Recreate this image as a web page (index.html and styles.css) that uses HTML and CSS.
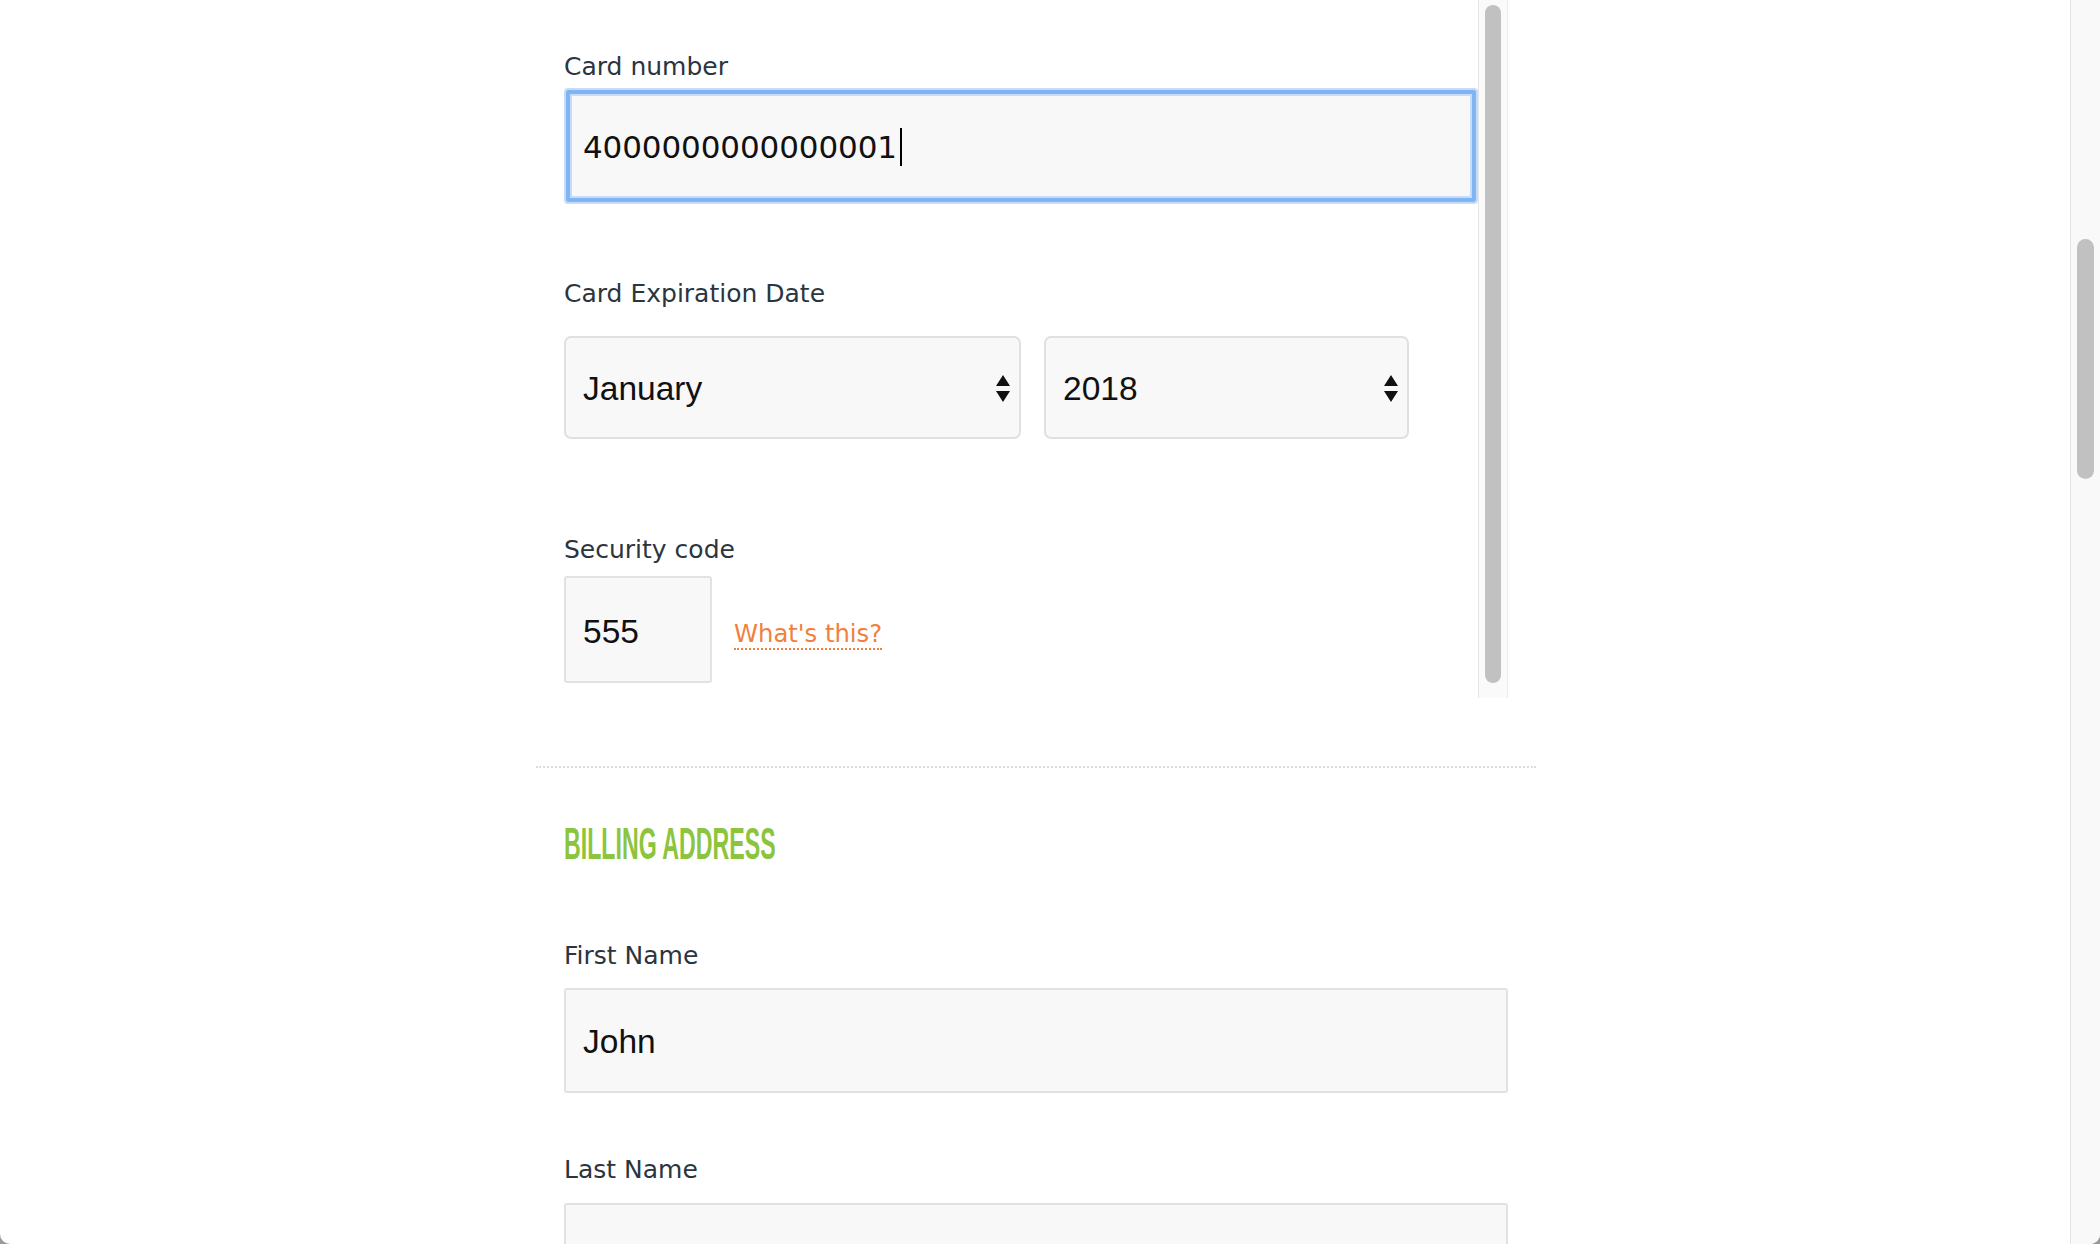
FILE: index.html
```html
<!DOCTYPE html>
<html lang="en">
<head>
<meta charset="utf-8">
<title>Checkout</title>
<link rel="stylesheet" href="styles.css">
</head>
<body>
<div class="window">
  <main class="page">
    <div class="column">
      <div class="frame">
        <div class="frame-content">
          <div class="field field-card">
            <div class="label">Card number</div>
            <div class="input input-card input-focus">
              <span class="value value-card">4000000000000001</span><span class="caret"></span>
            </div>
          </div>
          <div class="field field-exp">
            <div class="label">Card Expiration Date</div>
            <div class="select-row">
              <div class="select select-month">
                <span class="value">January</span>
                <svg class="select-arrows" width="14" height="27" viewBox="0 0 14 27"><path d="M0 11 L7 0 L14 11 Z M0 16 L14 16 L7 27 Z" fill="#111"/></svg>
              </div>
              <div class="select select-year">
                <span class="value">2018</span>
                <svg class="select-arrows" width="14" height="27" viewBox="0 0 14 27"><path d="M0 11 L7 0 L14 11 Z M0 16 L14 16 L7 27 Z" fill="#111"/></svg>
              </div>
            </div>
          </div>
          <div class="field field-sec">
            <div class="label">Security code</div>
            <div class="sec-row">
              <div class="input input-sec"><span class="value">555</span></div>
              <a class="help-link" href="#">What's this?</a>
            </div>
          </div>
        </div>
        <div class="frame-scrollbar"><div class="frame-thumb"></div></div>
      </div>
      <div class="divider"></div>
      <section class="billing">
        <h2 class="section-title"><span class="section-title-text">BILLING ADDRESS</span></h2>
        <div class="field field-first">
          <div class="label">First Name</div>
          <div class="input input-wide"><span class="value">John</span></div>
        </div>
        <div class="field field-last">
          <div class="label">Last Name</div>
          <div class="input input-wide"></div>
        </div>
      </section>
    </div>
  </main>
  <div class="page-scrollbar"><div class="page-thumb"></div></div>
</div>
</body>
</html>
```
FILE: styles.css
```css
html {
  background: #9a9a9a;
}
body {
  margin: 0;
  font-family: "DejaVu Sans", sans-serif;
}
.window {
  display: flex;
  width: 2100px;
  height: 1244px;
  overflow: hidden;
  background: #ffffff;
  border-radius: 0 0 10px 10px;
}
.page {
  flex: 1;
  height: 1244px;
  overflow: hidden;
}
.column {
  width: 1000px;
  margin-left: 536px;
}
.frame {
  display: flex;
  height: 698px;
  margin: 0 28px;
}
.frame-content {
  width: 914px;
  padding-top: 52px;
}
.label {
  font-family: "DejaVu Sans", sans-serif;
  font-size: 25px;
  line-height: 30px;
  color: #2b3540;
}
.input {
  display: flex;
  align-items: center;
  box-sizing: border-box;
  background: #f8f8f8;
  border: 2px solid #e2e2e2;
  border-radius: 3px;
  padding-left: 17px;
}
.value {
  font-family: "Liberation Sans", Arial, sans-serif;
  font-size: 33.5px;
  color: #111111;
  white-space: nowrap;
}
.field-card .label {
  margin-bottom: 6px;
}
.input-card {
  width: 914px;
  height: 116px;
  border-radius: 4px;
}
.input-focus {
  border: 2px solid #c3dcfa;
  box-shadow: inset 0 0 0 4px #80b4f2, inset 0 0 0 6px #c6ddf9;
}
.value-card {
  font-family: "DejaVu Sans", sans-serif;
  font-size: 31px;
  letter-spacing: -0.1px;
  margin-top: 2px;
}
.caret {
  width: 2px;
  height: 38px;
  margin-left: 3px;
  margin-top: 2px;
  background: #000000;
}
.field-exp {
  margin-top: 75px;
}
.select-row {
  display: flex;
  gap: 23px;
  margin-top: 27px;
}
.select {
  display: flex;
  align-items: center;
  justify-content: space-between;
  box-sizing: border-box;
  height: 103px;
  padding: 0 9px 0 17px;
  background: #f8f8f8;
  border: 2px solid #e0e0e0;
  border-radius: 7px;
}
.select .value {
  margin-top: 2px;
}
.select-month {
  width: 457px;
}
.select-year {
  width: 365px;
}
.select-arrows {
  display: block;
  margin-top: 2px;
}
.field-sec {
  margin-top: 96px;
}
.sec-row {
  display: flex;
  align-items: center;
  gap: 22px;
  margin-top: 11px;
}
.input-sec {
  width: 148px;
  height: 107px;
}
.input-sec .value {
  margin-top: 4px;
}
.help-link {
  display: inline-block;
  margin-top: 12px;
  font-family: "DejaVu Sans", sans-serif;
  font-size: 24.3px;
  line-height: 26px;
  color: #f27f3d;
  text-decoration: none;
  border-bottom: 2px dotted #f27f3d;
  padding-bottom: 1px;
}
.frame-scrollbar {
  box-sizing: border-box;
  width: 30px;
  height: 698px;
  background: #fafafa;
  border-left: 1px solid #e6e6e6;
  border-right: 1px solid #ececec;
  padding: 5px 0 0 6px;
}
.frame-thumb {
  width: 16px;
  height: 678px;
  border-radius: 8px;
  background: #c1c1c1;
}
.divider {
  margin-top: 68px;
  border-top: 2px dotted #dcdcdc;
}
.billing {
  padding: 0 28px;
}
.section-title {
  margin: 54px 0 0;
  height: 44px;
  font-family: "Liberation Sans", Arial, sans-serif;
  font-weight: 700;
  font-size: 45px;
  line-height: 44px;
  color: #8cc43e;
  white-space: nowrap;
}
.section-title-text {
  display: inline-block;
  transform: scaleX(0.515);
  transform-origin: left center;
}
.field-first {
  margin-top: 75px;
}
.field-last {
  margin-top: 62px;
}
.field-first .input {
  margin-top: 17px;
}
.field-last .input {
  margin-top: 18px;
}
.input-wide {
  width: 944px;
  height: 105px;
}
.input-wide .value {
  margin-top: 2px;
}
.page-scrollbar {
  box-sizing: border-box;
  width: 30px;
  height: 1244px;
  background: #f9f9f9;
  border-left: 1px solid #e4e4e4;
  padding: 239px 0 0 6px;
}
.page-thumb {
  width: 17px;
  height: 240px;
  border-radius: 9px;
  background: #c1c1c1;
}
```
